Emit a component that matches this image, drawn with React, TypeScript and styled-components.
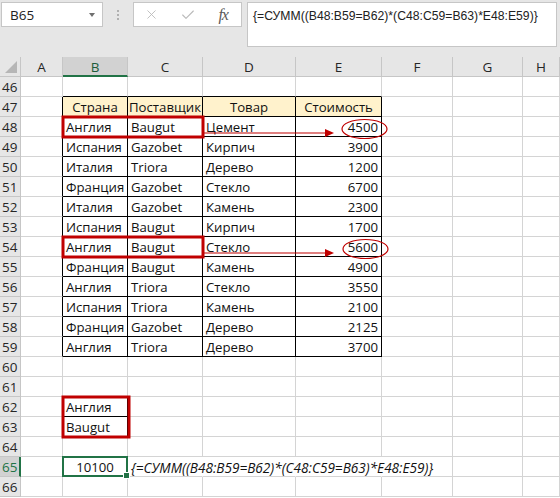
import React from 'react';
import styled, { createGlobalStyle } from 'styled-components';
import { X, Check } from 'lucide-react';

const Global = createGlobalStyle`
  html, body { margin: 0; padding: 0; background: #fff; }
  body { font-family: "Open Sans", "Noto Sans", sans-serif; }
`;

const Screen = styled.div`
  width: 560px;
  height: 498px;
  overflow: hidden;
  background: #fff;
  display: flex;
  flex-direction: column;
`;

const Toolbar = styled.div`
  height: 57px;
  flex: none;
  box-sizing: border-box;
  background: #e6e6e6;
  display: flex;
  align-items: flex-start;
  padding: 2px 0 0 1px;
`;

const NameBox = styled.div`
  width: 102px;
  height: 25px;
  box-sizing: border-box;
  border: 1px solid #c6c6c6;
  background: #fff;
  display: flex;
  align-items: center;
  justify-content: space-between;
  padding: 0 7px 0 8px;
  font-family: "Open Sans", sans-serif;
  font-size: 13.5px;
  color: #222;
`;

const Caret = styled.span`
  width: 0;
  height: 0;
  border-left: 3.5px solid transparent;
  border-right: 3.5px solid transparent;
  border-top: 4px solid #6f6f6f;
`;

const Grip = styled.div`
  width: 30px;
  height: 25px;
  display: flex;
  flex-direction: column;
  align-items: center;
  justify-content: center;
  gap: 2px;
`;

const GripDot = styled.span`
  width: 2px;
  height: 2px;
  background: #b0b0b0;
`;

const FxBox = styled.div`
  width: 109px;
  height: 25px;
  box-sizing: border-box;
  border: 1px solid #c6c6c6;
  background: #fff;
  display: flex;
  align-items: center;
`;

const FxSlot = styled.div`
  width: 36px;
  height: 100%;
  display: flex;
  align-items: center;
  justify-content: center;
  color: #b9b9b9;
`;

const FxLabel = styled.span`
  font-family: "Liberation Serif", "DejaVu Serif", serif;
  font-style: italic;
  font-size: 16px;
  color: #5a5a5a;
  letter-spacing: -1px;
`;

const FormulaInput = styled.div`
  margin-left: 5px;
  width: 310px;
  height: 45px;
  box-sizing: border-box;
  border: 1px solid #c6c6c6;
  background: #fff;
  padding: 4px 0 0 5px;
  font-family: "Liberation Sans", Arial, sans-serif;
  font-size: 12.2px;
  line-height: 18px;
  color: #222;
  white-space: nowrap;
  overflow: hidden;
`;

const Sheet = styled.div`
  position: relative;
  display: grid;
  grid-template-columns: 21px 42px 65px 75px 93px 86px 71px 70px 37px;
  grid-auto-rows: 20px;
`;

const Corner = styled.div`
  position: relative;
  background: #e6e6e6;
  box-sizing: border-box;
  border-right: 1px solid #c6c6c6;
  border-bottom: 1px solid #c6c6c6;
  &::after {
    content: '';
    position: absolute;
    right: 3px;
    bottom: 3px;
    width: 0;
    height: 0;
    border-left: 12px solid transparent;
    border-bottom: 12px solid #b6b6b6;
  }
`;

const ColHead = styled.div<{ $sel?: boolean }>`
  box-sizing: border-box;
  background: ${p => (p.$sel ? '#d2d2d2' : '#e6e6e6')};
  border-right: 1px solid #c6c6c6;
  border-bottom: ${p => (p.$sel ? '2px solid #217346' : '1px solid #c6c6c6')};
  display: flex;
  align-items: center;
  justify-content: center;
  padding-top: ${p => (p.$sel ? '1px' : '0')};
  font-family: "Open Sans", sans-serif;
  font-size: 13.5px;
  color: ${p => (p.$sel ? '#1e5c3a' : '#262626')};
`;

const RowHead = styled.div<{ $sel?: boolean }>`
  box-sizing: border-box;
  background: ${p => (p.$sel ? '#d2d2d2' : '#e6e6e6')};
  border-right: ${p => (p.$sel ? '2px solid #217346' : '1px solid #c6c6c6')};
  border-bottom: 1px solid #c6c6c6;
  display: flex;
  align-items: center;
  padding-left: 2px;
  font-family: "Open Sans", sans-serif;
  font-size: 13.5px;
  color: ${p => (p.$sel ? '#217346' : '#262626')};
`;

const Cell = styled.div<{
  $right: string;
  $bottom: string;
  $bg?: string;
  $align: 'left' | 'right' | 'center';
  $italic?: boolean;
}>`
  position: relative;
  box-sizing: border-box;
  border-right: 1px solid ${p => p.$right};
  border-bottom: 1px solid ${p => p.$bottom};
  background: ${p => p.$bg || 'transparent'};
  display: flex;
  align-items: center;
  justify-content: ${p =>
    p.$align === 'right' ? 'flex-end' : p.$align === 'center' ? 'center' : 'flex-start'};
  padding: 1px 3px 0 3px;
  white-space: nowrap;
  overflow: visible;
  font-family: "Open Sans", "Noto Sans", sans-serif;
  font-size: ${p => (p.$italic ? '13.6px' : '13.2px')};
  font-style: ${p => (p.$italic ? 'italic' : 'normal')};
  color: #111;
`;

const Selection = styled.div`
  position: absolute;
  top: -1px;
  left: -1px;
  right: -1px;
  bottom: -1px;
  border: 2px solid #217346;
  z-index: 2;
  pointer-events: none;
  &::after {
    content: '';
    position: absolute;
    right: -4px;
    bottom: -4px;
    width: 5px;
    height: 5px;
    background: #217346;
    border: 1px solid #fff;
  }
`;

const Annotations = styled.svg`
  position: absolute;
  left: 0;
  top: 0;
  z-index: 3;
  pointer-events: none;
`;

const COLS = ['A', 'B', 'C', 'D', 'E', 'F', 'G', 'H'];

const DATA: [string, string, string, string][] = [
  ['Англия', 'Baugut', 'Цемент', '4500'],
  ['Испания', 'Gazobet', 'Кирпич', '3900'],
  ['Италия', 'Triora', 'Дерево', '1200'],
  ['Франция', 'Gazobet', 'Стекло', '6700'],
  ['Италия', 'Gazobet', 'Камень', '2300'],
  ['Испания', 'Baugut', 'Кирпич', '1700'],
  ['Англия', 'Baugut', 'Стекло', '5600'],
  ['Франция', 'Baugut', 'Камень', '4900'],
  ['Англия', 'Triora', 'Стекло', '3550'],
  ['Испания', 'Triora', 'Камень', '2100'],
  ['Франция', 'Gazobet', 'Дерево', '2125'],
  ['Англия', 'Triora', 'Дерево', '3700'],
];

const HEADERS = ['Страна', 'Поставщик', 'Товар', 'Стоимость'];
const FORMULA = '{=СУММ((B48:B59=B62)*(C48:C59=B63)*E48:E59)}';

const inTable = (r: number, c: number) =>
  (r >= 47 && r <= 59 && c >= 2 && c <= 5) || (c === 2 && (r === 62 || r === 63));

type Content = { text?: string; align: 'left' | 'right' | 'center'; bg?: string; italic?: boolean };

const contentOf = (r: number, c: number): Content => {
  if (r === 47 && c >= 2 && c <= 5) return { text: HEADERS[c - 2], align: 'center', bg: '#fff2cc' };
  if (r >= 48 && r <= 59 && c >= 2 && c <= 5) {
    return { text: DATA[r - 48][c - 2], align: c === 5 ? 'right' : 'left' };
  }
  if (c === 2 && r === 62) return { text: 'Англия', align: 'left' };
  if (c === 2 && r === 63) return { text: 'Baugut', align: 'left' };
  if (c === 2 && r === 65) return { text: '10100', align: 'center' };
  if (c === 3 && r === 65) return { text: FORMULA, align: 'left', italic: true };
  return { align: 'left' };
};

const ROWS = Array.from({ length: 21 }, (_, i) => 46 + i);

function Arrow({ y }: { y: number }) {
  return (
    <g>
      <line x1={204} y1={y} x2={327} y2={y} stroke="#c00000" strokeWidth={1.2} />
      <polygon points={`334,${y} 325,${y - 4} 325,${y + 4}`} fill="#c00000" />
    </g>
  );
}

export default function App() {
  return (
    <>
      <Global />
      <Screen>
        <Toolbar>
          <NameBox>
            <span>B65</span>
            <Caret />
          </NameBox>
          <Grip>
            <GripDot />
            <GripDot />
            <GripDot />
          </Grip>
          <FxBox>
            <FxSlot>
              <X size={15} strokeWidth={1.4} />
            </FxSlot>
            <FxSlot>
              <Check size={16} strokeWidth={1.6} />
            </FxSlot>
            <FxSlot>
              <FxLabel>fx</FxLabel>
            </FxSlot>
          </FxBox>
          <FormulaInput>{FORMULA}</FormulaInput>
        </Toolbar>
        <Sheet>
          <Corner />
          {COLS.map((l, i) => (
            <ColHead key={i} $sel={l === 'B'}>
              {l}
            </ColHead>
          ))}
          {ROWS.map(r => (
            <React.Fragment key={r}>
              <RowHead $sel={r === 65}>{r}</RowHead>
              {COLS.map((_, i) => {
                const c = i + 1;
                const ct = contentOf(r, c);
                const hideRight = r === 65 && c >= 3 && c <= 5;
                const right = hideRight
                  ? 'transparent'
                  : inTable(r, c) || inTable(r, c + 1)
                  ? '#000'
                  : '#d4d4d4';
                const bottom = inTable(r, c) || inTable(r + 1, c) ? '#000' : '#d4d4d4';
                return (
                  <Cell
                    key={c}
                    $right={right}
                    $bottom={bottom}
                    $bg={ct.bg}
                    $align={ct.align}
                    $italic={ct.italic}
                  >
                    {ct.text}
                    {r === 65 && c === 2 && <Selection />}
                  </Cell>
                );
              })}
            </React.Fragment>
          ))}
          <Annotations width={560} height={441} viewBox="0 0 560 441">
            <rect x={63} y={60} width={140} height={20} fill="none" stroke="#c00000" strokeWidth={3} />
            <rect x={63} y={180} width={140} height={20} fill="none" stroke="#c00000" strokeWidth={3} />
            <rect x={63} y={340} width={66} height={40} fill="none" stroke="#c00000" strokeWidth={3} />
            <Arrow y={76} />
            <Arrow y={196} />
            <ellipse cx={364.5} cy={72} rx={22.5} ry={9.5} fill="none" stroke="#c00000" strokeWidth={1.2} />
            <ellipse cx={365.5} cy={192} rx={22.5} ry={9.5} fill="none" stroke="#c00000" strokeWidth={1.2} />
          </Annotations>
        </Sheet>
      </Screen>
    </>
  );
}
